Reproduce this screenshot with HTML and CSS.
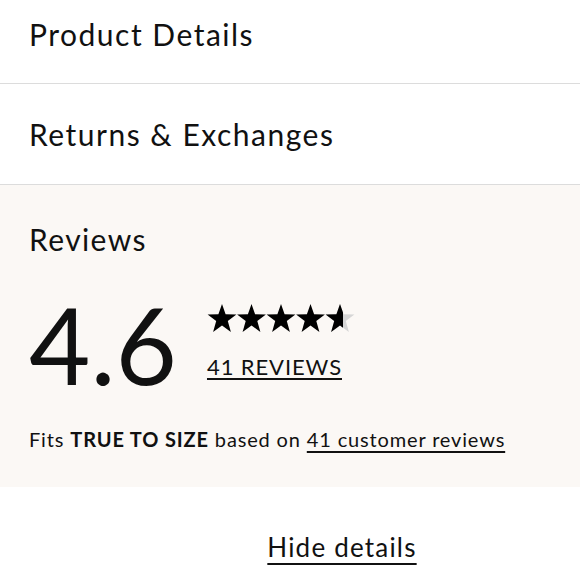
FILE: index.html
```html
<!DOCTYPE html>
<html lang="en">
<head>
  <meta charset="UTF-8">
  <title>Product Info</title>
  <meta name="viewport" content="width=device-width, initial-scale=1.0">
  <link rel="stylesheet" href="styles.css">
</head>
<body>

<div class="accordion">
  <div class="acc-row first">Product Details</div>
  <div class="acc-row">Returns &amp; Exchanges</div>

  <div class="reviews">
    <h2 class="reviews-title">Reviews</h2>
    <div class="rating">
      <div class="rating-num">4.6</div>
      <div class="rating-side">
        <div class="stars">
          <svg width="150" height="30" viewBox="0 0 150 30">
            <defs>
              <path id="star" d="M15 1l3.6 10.2 10.8.2-8.6 6.6 3.1 10.9-8.9-6.4-8.9 6.4 3.1-10.9-8.6-6.6 10.8-.2z"/>
              <clipPath id="part"><rect x="0" y="0" width="18" height="30"/></clipPath>
            </defs>
            <use href="#star" x="0" fill="#000"/>
            <use href="#star" x="29.5" fill="#000"/>
            <use href="#star" x="59" fill="#000"/>
            <use href="#star" x="88.5" fill="#000"/>
            <g transform="translate(118 0)">
              <use href="#star" fill="#d6d6d6"/>
              <use href="#star" fill="#000" clip-path="url(#part)"/>
            </g>
          </svg>
        </div>
        <a href="#" class="review-count">41 REVIEWS</a>
      </div>
    </div>
    <p class="fit">Fits <b>TRUE TO SIZE</b> based on <a href="#">41 customer reviews</a></p>
  </div>

  <div class="hide-wrap"><a href="#" class="hide-link">Hide details</a></div>
</div>

</body>
</html>
```

FILE: styles.css
```css
body { margin: 0; font-family: Lato, "Noto Sans", sans-serif; color: #111; background: #fff; }
a { color: #111; }
.accordion { overflow: hidden; height: 580px; }
.acc-row { height: 100px; display: flex; align-items: center; padding: 0 29px; font-size: 30px; letter-spacing: 1.5px; border-bottom: 1px solid #dcdcdc; }
.acc-row.first { margin-top: -15px; height: 98px; }
.reviews { background: #fbf8f5; padding: 36px 29px 36px; }
.reviews-title { margin: 0; font-size: 30px; font-weight: normal; letter-spacing: 1.4px; }
.rating { display: flex; align-items: center; gap: 30px; margin-top: 34px; }
.rating-num { font-size: 106px; line-height: 1; }
.rating-side { display: flex; flex-direction: column; gap: 20px; margin-top: 0; }
.stars svg { display: block; margin-top: -6px; }
.review-count { font-size: 22px; letter-spacing: 0.9px; text-decoration-thickness: 2px; text-underline-offset: 3px; }
.fit { margin: 30px 0 0; font-size: 20px; letter-spacing: 0.85px; }
.fit a { text-decoration-thickness: 2px; text-underline-offset: 4px; }
.hide-wrap { text-align: center; padding-top: 44px; padding-left: 104px; }
.hide-link { font-size: 26px; letter-spacing: 1.2px; text-decoration-thickness: 2px; text-underline-offset: 6px; }
```
